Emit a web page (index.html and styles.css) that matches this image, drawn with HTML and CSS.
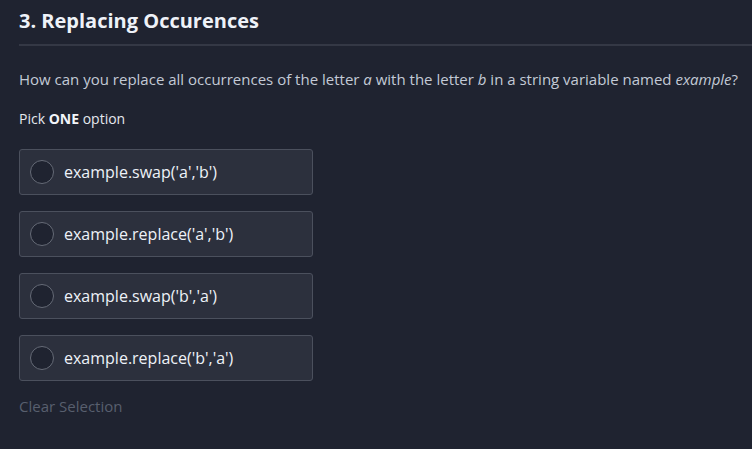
FILE: index.html
```html
<!DOCTYPE html>
<html lang="en">
<head>
<meta charset="utf-8">
<title>Replacing Occurences</title>
<link rel="stylesheet" href="styles.css">
</head>
<body>
<main class="question">
  <h1 class="title">3. Replacing Occurences</h1>
  <hr class="divider">
  <p class="prompt">How can you replace all occurrences of the letter <em>a</em> with the letter <em>b</em> in a string variable named <em>example</em>?</p>
  <p class="pick">Pick <strong>ONE</strong> option</p>
  <div class="options">
    <label class="option"><span class="radio"></span><span class="option-text">example.swap('a','b')</span></label>
    <label class="option"><span class="radio"></span><span class="option-text">example.replace('a','b')</span></label>
    <label class="option"><span class="radio"></span><span class="option-text">example.swap('b','a')</span></label>
    <label class="option"><span class="radio"></span><span class="option-text">example.replace('b','a')</span></label>
  </div>
  <div class="clear">Clear Selection</div>
</main>
</body>
</html>
```
FILE: styles.css
```css
html, body {
  margin: 0;
  padding: 0;
  background: #1f2330;
  height: 100%;
}
body {
  font-family: "Open Sans", "Noto Sans", sans-serif;
  color: #c3cad6;
}
.question {
  padding: 6px 0 0 19px;
}
.title {
  margin: 0;
  font-size: 20px;
  font-weight: 700;
  line-height: 30px;
  color: #eef2f8;
}
.divider {
  margin: 8px 0 0 0;
  border: 0;
  height: 2px;
  background: #343845;
}
.prompt {
  margin: 23px 0 0 0;
  font-size: 15px;
  line-height: 20px;
  color: #c3cad6;
}
.prompt em {
  font-style: italic;
}
.pick {
  margin: 20px 0 0 0;
  font-size: 14px;
  line-height: 20px;
  color: #e4e8ee;
}
.pick strong {
  font-weight: 700;
  color: #f2f5f9;
}
.options {
  margin-top: 20px;
  display: flex;
  flex-direction: column;
  gap: 16px;
  width: 294px;
}
.option {
  display: flex;
  align-items: center;
  gap: 10px;
  height: 46px;
  box-sizing: border-box;
  padding: 0 10px;
  background: #2c303d;
  border: 1px solid #4b505d;
  border-radius: 3px;
}
.radio {
  width: 22px;
  height: 22px;
  border: 1px solid #666b77;
  border-radius: 50%;
  background: #1f2330;
  flex: none;
}
.option-text {
  font-size: 16px;
  color: #eef2f8;
}
.clear {
  margin-top: 15px;
  font-size: 15px;
  line-height: 20px;
  color: #585f6e;
}
```
